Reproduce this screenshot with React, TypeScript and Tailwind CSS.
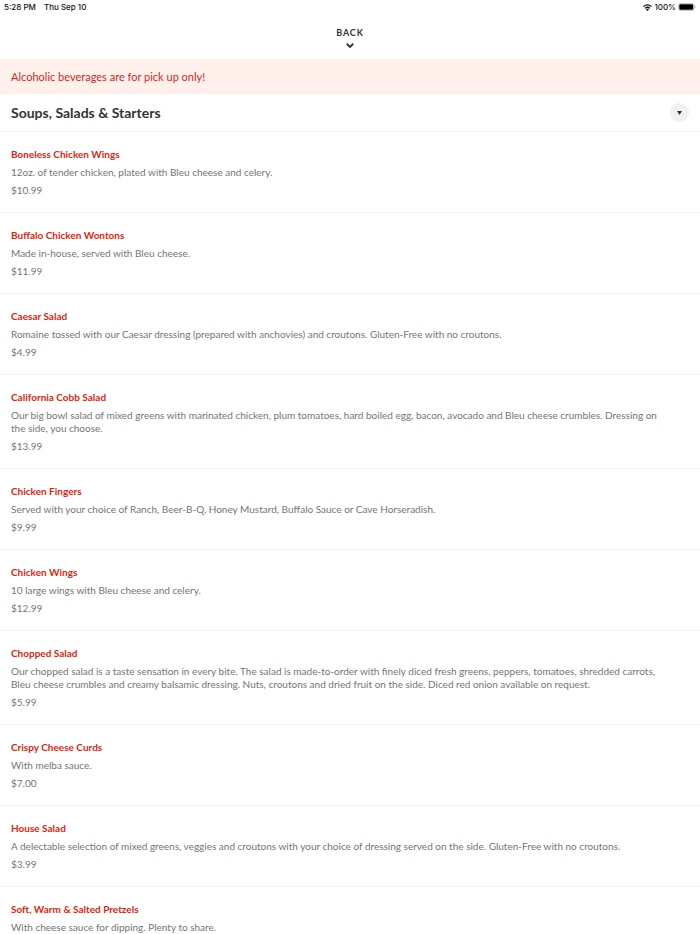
interface MenuItem {
  name: string;
  description: string;
  price?: string;
}

const MENU_ITEMS: MenuItem[] = [
  {
    name: 'Boneless Chicken Wings',
    description: '12oz. of tender chicken, plated with Bleu cheese and celery.',
    price: '$10.99'
  },
  {
    name: 'Buffalo Chicken Wontons',
    description: 'Made in-house, served with Bleu cheese.',
    price: '$11.99'
  },
  {
    name: 'Caesar Salad',
    description:
      'Romaine tossed with our Caesar dressing (prepared with anchovies) and croutons. Gluten-Free with no croutons.',
    price: '$4.99'
  },
  {
    name: 'California Cobb Salad',
    description:
      'Our big bowl salad of mixed greens with marinated chicken, plum tomatoes, hard boiled egg, bacon, avocado and Bleu cheese crumbles. Dressing on the side, you choose.',
    price: '$13.99'
  },
  {
    name: 'Chicken Fingers',
    description:
      'Served with your choice of Ranch, Beer-B-Q, Honey Mustard, Buffalo Sauce or Cave Horseradish.',
    price: '$9.99'
  },
  {
    name: 'Chicken Wings',
    description: '10 large wings with Bleu cheese and celery.',
    price: '$12.99'
  },
  {
    name: 'Chopped Salad',
    description:
      'Our chopped salad is a taste sensation in every bite. The salad is made-to-order with finely diced fresh greens, peppers, tomatoes, shredded carrots, Bleu cheese crumbles and creamy balsamic dressing. Nuts, croutons and dried fruit on the side. Diced red onion available on request.',
    price: '$5.99'
  },
  {
    name: 'Crispy Cheese Curds',
    description: 'With melba sauce.',
    price: '$7.00'
  },
  {
    name: 'House Salad',
    description:
      'A delectable selection of mixed greens, veggies and croutons with your choice of dressing served on the side. Gluten-Free with no croutons.',
    price: '$3.99'
  },
  {
    name: 'Soft, Warm & Salted Pretzels',
    description: 'With cheese sauce for dipping. Plenty to share.'
  }
];

const WifiIcon = () => (
  <svg viewBox="0 0 18 14" className="h-[7px] w-[9px]" aria-hidden="true">
    <g fill="none" stroke="#111" strokeWidth="2.6">
      <path d="M1 5.2a11.4 11.4 0 0 1 16 0" />
      <path d="M4.2 8.8a6.8 6.8 0 0 1 9.6 0" />
    </g>
    <path d="M9 13.8 6 10.8a4.2 4.2 0 0 1 6 0Z" fill="#111" />
  </svg>
);

const BatteryIcon = () => (
  <svg viewBox="0 0 36 16" className="h-2 w-[18px]" aria-hidden="true">
    <rect x="1" y="0.7" width="31" height="14.6" rx="4.5" fill="none" stroke="#a3a3a3" strokeWidth="1.4" />
    <rect x="2.6" y="2.4" width="27.8" height="11.2" rx="2.5" fill="#000" />
    <path d="M33.4 5.5c2.4.6 2.4 4.4 0 5Z" fill="#a3a3a3" />
  </svg>
);

const StatusBar = () => (
  <div className="flex h-[14px] items-center justify-between px-1 font-['Inter',sans-serif] text-[8px] leading-[14px] font-medium text-[#111]">
    <div className="flex gap-2">
      <span>5:28 PM</span>
      <span>Thu Sep 10</span>
    </div>
    <div className="flex items-center gap-[2px]">
      <WifiIcon />
      <span>100%</span>
      <BatteryIcon />
    </div>
  </div>
);

const MenuRow = ({ item }: { item: MenuItem }) => (
  <li className="flex flex-col gap-[5px] border-b border-[#f3f3f3] pt-4 pr-[30px] pb-[15px] pl-[11px] text-[10px] leading-[13px] text-[#757575]">
    <h2 className="font-bold text-[#e0230f]">{item.name}</h2>
    <p>{item.description}</p>
    {item.price && <p>{item.price}</p>}
  </li>
);

export default function App() {
  return (
    <div className="h-screen overflow-hidden bg-white font-['Lato',sans-serif]">
      <StatusBar />
      <header className="flex justify-center pt-[13px] pb-[10px]">
        <button type="button" className="flex flex-col items-center gap-[3px]">
          <span className="text-[9px] leading-[12px] font-bold tracking-widest text-[#333]">BACK</span>
          <svg viewBox="0 0 16 14" className="h-[7px] w-2" aria-hidden="true">
            <path d="m1.5 3.5 6.5 6.5 6.5-6.5" fill="none" stroke="#333" strokeWidth="3.6" />
          </svg>
        </button>
      </header>
      <p className="bg-[#fff0eb] px-[11px] py-[11px] text-[11px] leading-[13px] text-[#cf2a1b]">
        Alcoholic beverages are for pick up only!
      </p>
      <div className="flex items-center justify-between border-b border-[#f3f3f3] px-[11px] py-[9px]">
        <h1 className="text-[14px] leading-[19px] font-bold text-[#333]">Soups, Salads &amp; Starters</h1>
        <button
          type="button"
          aria-label="Choose a menu section"
          className="flex size-[19px] items-center justify-center rounded-full bg-[#f1f1f1]"
        >
          <svg viewBox="0 0 10 8" className="h-1 w-[5px]" aria-hidden="true">
            <path d="M0 0h10L5 8Z" fill="#333" />
          </svg>
        </button>
      </div>
      <ul>
        {MENU_ITEMS.map((item) => (
          <MenuRow key={item.name} item={item} />
        ))}
      </ul>
    </div>
  );
}
